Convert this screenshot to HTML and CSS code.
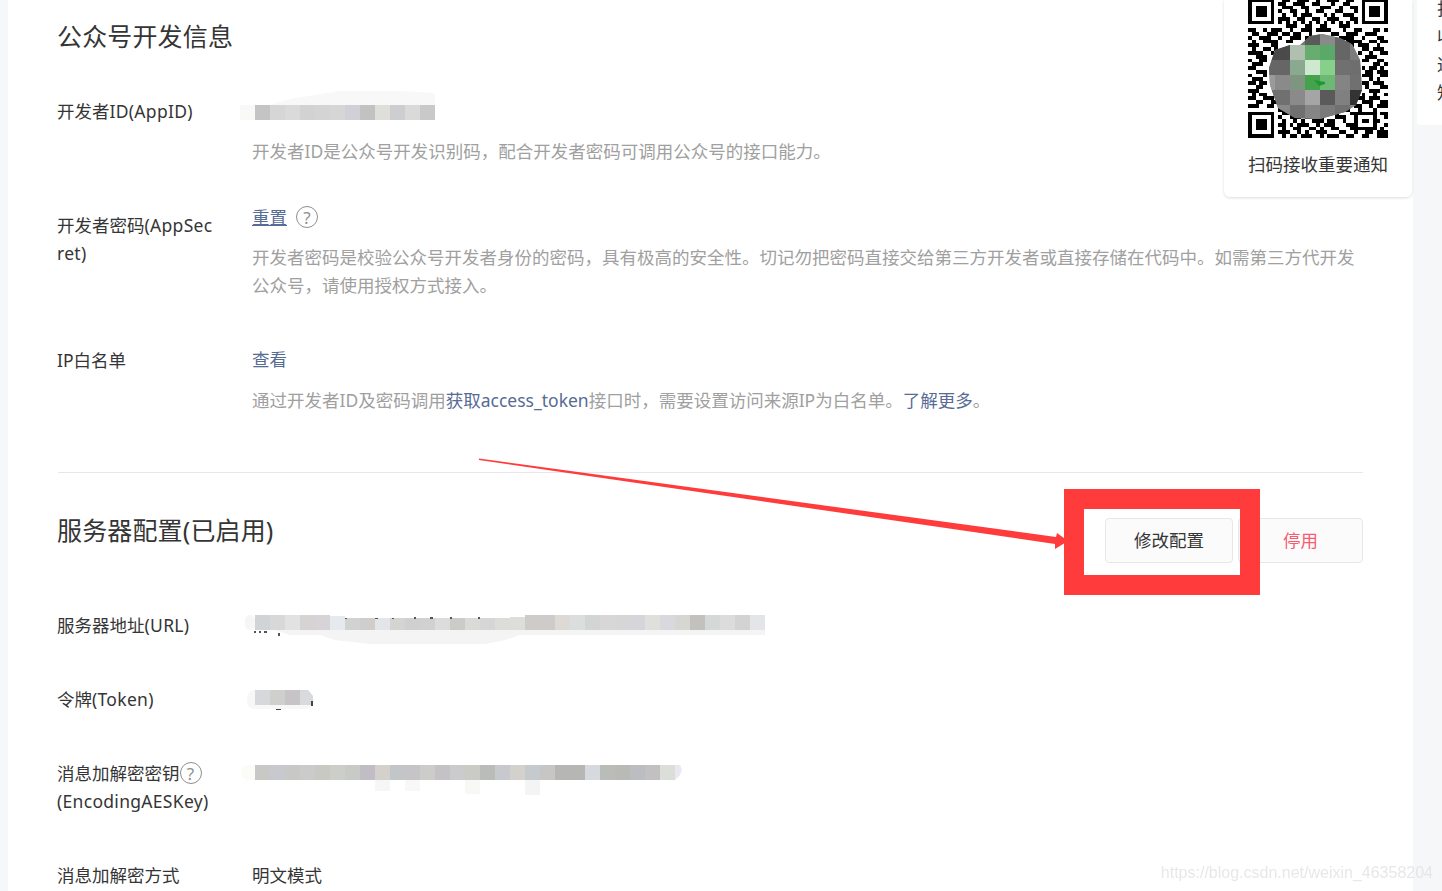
FILE: index.html
```html
<!DOCTYPE html>
<html lang="zh-CN">
<head>
<meta charset="utf-8">
<title>公众号开发信息</title>
<link rel="stylesheet" href="styles.css">
</head>
<body>
<div class="page">
  <main class="main">
    <section class="section section-first">
      <h2 class="title">公众号开发信息</h2>
      <div class="row">
        <div class="label">开发者<span class="en">ID(AppID)</span></div>
        <div class="value">
          <svg class="mosaic" width="200" height="28" viewBox="240 97 200 28">
            <path d="M240 118l10-7 40-12 50-8h60l35 2v12h-195z" fill="#f8f8f8"/>
            <rect x="240" y="110" width="15" height="10" fill="#f9f9f8"/>
            <rect x="255" y="105" width="15" height="15" fill="#c4c4c4"/>
            <rect x="270" y="105" width="15" height="15" fill="#d6d6d6"/>
            <rect x="285" y="105" width="15" height="15" fill="#dadada"/>
            <rect x="300" y="105" width="15" height="15" fill="#d2d2d2"/>
            <rect x="315" y="105" width="15" height="15" fill="#d4d4d4"/>
            <rect x="330" y="105" width="15" height="15" fill="#d6d6d6"/>
            <rect x="345" y="105" width="15" height="15" fill="#d0d1d6"/>
            <rect x="360" y="105" width="15" height="15" fill="#c2c2c2"/>
            <rect x="375" y="105" width="15" height="15" fill="#dfdedb"/>
            <rect x="390" y="105" width="15" height="15" fill="#cdced2"/>
            <rect x="405" y="105" width="15" height="15" fill="#dadada"/>
            <rect x="420" y="105" width="15" height="15" fill="#c9c9c9"/>
          </svg>
          <p class="desc">开发者ID是公众号开发识别码，配合开发者密码可调用公众号的接口能力。</p>
        </div>
      </div>
      <div class="row">
        <div class="label">开发者密码<span class="en">(AppSecret)</span></div>
        <div class="value value-raised">
          <div class="action"><a class="link link-underlined" href="#">重置</a><span class="help help-spaced">?</span></div>
          <p class="desc">开发者密码是校验公众号开发者身份的密码，具有极高的安全性。切记勿把密码直接交给第三方开发者或直接存储在代码中。如需第三方代开发公众号，请使用授权方式接入。</p>
        </div>
      </div>
      <div class="row">
        <div class="label label-nudged">IP白名单</div>
        <div class="value">
          <a class="link" href="#">查看</a>
          <p class="desc desc-loose">通过开发者ID及密码调用<a class="link" href="#">获取access_token</a>接口时，需要设置访问来源IP为白名单。<a class="link" href="#">了解更多</a>。</p>
        </div>
      </div>
    </section>
    <section class="section">
      <div class="section-head">
        <h2 class="title">服务器配置(已启用)</h2>
        <div class="buttons">
          <button class="btn" type="button">修改配置</button>
          <button class="btn btn-danger" type="button">停用</button>
        </div>
      </div>
      <div class="row">
        <div class="label">服务器地址<span class="en">(URL)</span></div>
        <div class="value">
          <svg class="mosaic" width="530" height="28" viewBox="240 611 530 28">
            <path d="M250 630h515v5h-245l-15 5-20 4h-115l-35-4-15-5h-30l-15-5z" fill="#f4f4f4"/>
            <rect x="245" y="615" width="10" height="15" rx="5" fill="#f8f6f4"/>
            <rect x="255" y="615" width="15" height="15" fill="#d0d4d6"/>
            <rect x="270" y="615" width="15" height="15" fill="#d8d8d8"/>
            <rect x="285" y="615" width="15" height="15" fill="#e2e2e2"/>
            <rect x="300" y="615" width="15" height="15" fill="#d6d4d2"/>
            <rect x="315" y="615" width="15" height="15" fill="#d6d4d6"/>
            <rect x="330" y="616" width="15" height="14" fill="#e6eaee"/>
            <rect x="345" y="618" width="15" height="12" fill="#d2d2d2"/>
            <rect x="360" y="618" width="15" height="12" fill="#cfcecc"/>
            <rect x="375" y="618" width="15" height="12" fill="#e2e6e8"/>
            <rect x="390" y="618" width="15" height="12" fill="#d4d4d2"/>
            <rect x="405" y="618" width="15" height="12" fill="#d0d0d0"/>
            <rect x="420" y="618" width="15" height="12" fill="#d0d2d2"/>
            <rect x="435" y="618" width="15" height="12" fill="#dcdcda"/>
            <rect x="450" y="618" width="15" height="12" fill="#cccbc9"/>
            <rect x="465" y="618" width="15" height="12" fill="#dadad8"/>
            <rect x="480" y="618" width="15" height="12" fill="#d4d6d8"/>
            <rect x="495" y="618" width="15" height="12" fill="#dddcda"/>
            <rect x="510" y="617" width="15" height="13" fill="#dcdedc"/>
            <rect x="525" y="615" width="30" height="15" fill="#cdccca"/>
            <rect x="555" y="615" width="15" height="15" fill="#dddad6"/>
            <rect x="570" y="615" width="15" height="15" fill="#dcdddf"/>
            <rect x="585" y="615" width="15" height="15" fill="#d2d5d4"/>
            <rect x="600" y="615" width="15" height="15" fill="#d8d6d6"/>
            <rect x="615" y="615" width="15" height="15" fill="#d6d6d6"/>
            <rect x="630" y="615" width="15" height="15" fill="#d4d6da"/>
            <rect x="645" y="615" width="15" height="15" fill="#dfdfdc"/>
            <rect x="660" y="615" width="15" height="15" fill="#d9d9dd"/>
            <rect x="675" y="615" width="15" height="15" fill="#d6d6d3"/>
            <rect x="690" y="615" width="15" height="15" fill="#c2c1be"/>
            <rect x="705" y="615" width="15" height="15" fill="#d4d8d7"/>
            <rect x="720" y="615" width="15" height="15" fill="#dcdcdc"/>
            <rect x="735" y="615" width="15" height="15" fill="#d2d3d2"/>
            <rect x="750" y="615" width="15" height="15" fill="#e4e5e8"/>
            <path d="M254 631h2v2h-2zM259 631h2v2h-2zM264 631h3v2h-3zM278 633h2v3h-2zM345 618h2v1h-2zM375 618h3v1h-3zM392 618h2v1h-2zM414 617h2v2h-2zM430 617h3v2h-3zM450 617h2v2h-2zM478 617h2v2h-2z" fill="#555555"/>
          </svg>
        </div>
      </div>
      <div class="row">
        <div class="label">令牌<span class="en">(Token)</span></div>
        <div class="value">
          <svg class="mosaic" width="100" height="28" viewBox="240 685 100 28">
            <rect x="247" y="690" width="66" height="19" rx="8" fill="#f8f7f6"/>
            <rect x="255" y="690" width="15" height="15" fill="#d6d8dc"/>
            <rect x="270" y="690" width="15" height="15" fill="#cfcfcd"/>
            <rect x="285" y="690" width="15" height="15" fill="#c6c4c6"/>
            <path d="M300 690h8l5 6v9h-13z" fill="#d8dade"/>
            <path d="M276 709h5v1h-5zM311 701h2v5h-2z" fill="#444444"/>
          </svg>
        </div>
      </div>
      <div class="row">
        <div class="label">消息加解密密钥<span class="help">?</span><br><span class="en">(EncodingAESKey)</span></div>
        <div class="value">
          <svg class="mosaic" width="450" height="28" viewBox="240 759 450 28">
            <rect x="241" y="765" width="20" height="15" rx="7" fill="#fbfbf8"/>
            <rect x="375" y="780" width="15" height="11" fill="#f6f6f6"/>
            <rect x="405" y="780" width="15" height="11" fill="#f8f8f6"/>
            <rect x="465" y="780" width="15" height="14" fill="#f8f8f6"/>
            <rect x="525" y="780" width="15" height="15" fill="#f4f4f4"/>
            <rect x="255" y="765" width="15" height="15" fill="#c8c8c6"/>
            <rect x="270" y="765" width="15" height="15" fill="#c8c9ce"/>
            <rect x="285" y="765" width="15" height="15" fill="#c8c8c6"/>
            <rect x="300" y="765" width="15" height="15" fill="#cbcbcb"/>
            <rect x="315" y="765" width="15" height="15" fill="#c9c9c4"/>
            <rect x="330" y="765" width="15" height="15" fill="#ccceca"/>
            <rect x="345" y="765" width="15" height="15" fill="#c8cac8"/>
            <rect x="360" y="765" width="15" height="15" fill="#c0bec4"/>
            <rect x="375" y="765" width="15" height="15" fill="#d4d0cc"/>
            <rect x="390" y="765" width="15" height="15" fill="#c2c6c9"/>
            <rect x="405" y="765" width="15" height="15" fill="#c6c4c6"/>
            <rect x="420" y="765" width="15" height="15" fill="#cccccb"/>
            <rect x="435" y="765" width="15" height="15" fill="#c4c2c5"/>
            <rect x="450" y="765" width="15" height="15" fill="#cbcbce"/>
            <rect x="465" y="765" width="15" height="15" fill="#cacbc5"/>
            <rect x="480" y="765" width="15" height="15" fill="#babcba"/>
            <rect x="495" y="765" width="15" height="15" fill="#c8c9ce"/>
            <rect x="510" y="765" width="15" height="15" fill="#d4d0cc"/>
            <rect x="525" y="765" width="15" height="15" fill="#c4cacd"/>
            <rect x="540" y="765" width="15" height="15" fill="#c8c6c4"/>
            <rect x="555" y="765" width="30" height="15" fill="#b6b6b4"/>
            <rect x="585" y="765" width="15" height="15" fill="#d6dade"/>
            <rect x="600" y="765" width="15" height="15" fill="#babcb8"/>
            <rect x="615" y="765" width="15" height="15" fill="#b9b9b6"/>
            <rect x="630" y="765" width="15" height="15" fill="#bcbdc0"/>
            <rect x="645" y="765" width="15" height="15" fill="#c2c0c0"/>
            <rect x="660" y="765" width="15" height="15" fill="#dcdeda"/>
            <path d="M675 765h5l2 5-2 5-5 5z" fill="#e8e8f0"/>
          </svg>
        </div>
      </div>
      <div class="row">
        <div class="label">消息加解密方式</div>
        <div class="value">明文模式</div>
      </div>
    </section>
  </main>
  <aside class="side"><div class="side-text">扫<br>收<br>通<br>知</div></aside>
</div>

<div class="qr-card">
  <svg class="qr" width="140" height="138" viewBox="1248 0 140 138">
    <defs>
      <clipPath id="blob"><path d="M1300 45l10-9 12-2 18 4 12 6 8 16 2 30-6 15-11 7-25 7-25-1-17-10-8-23-1-17 6-18 15-5z"/></clipPath>
    </defs>
    <g transform="translate(1248 -2) scale(3.784)">
      <path class="qr-ink" d="M0 .5h7M30 .5h7M0 1.5h1M6 1.5h1M30 1.5h1M36 1.5h1M0 2.5h1M2 2.5h3M6 2.5h1M30 2.5h1M32 2.5h3M36 2.5h1M0 3.5h1M2 3.5h3M6 3.5h1M30 3.5h1M32 3.5h3M36 3.5h1M0 4.5h1M2 4.5h3M6 4.5h1M30 4.5h1M32 4.5h3M36 4.5h1M0 5.5h1M6 5.5h1M30 5.5h1M36 5.5h1M0 6.5h7M30 6.5h7M0 30.500h7M0 31.500h1M6 31.500h1M0 32.500h1M2 32.500h3M6 32.500h1M0 33.500h1M2 33.500h3M6 33.500h1M0 34.500h1M2 34.500h3M6 34.500h1M0 35.500h1M6 35.500h1M0 36.500h7"/>
      <path class="qr-ink" d="M9 .5h2M13 .5h3M18 .5h1M21 .5h3M26 .5h2M8 1.500h2M12 1.500h3M17 1.500h2M22 1.500h1M25 1.500h2M9 2.500h3M14 2.500h2M19 2.500h3M24 2.500h1M27 2.500h2M8 3.500h1M11 3.500h2M15 3.500h1M18 3.500h2M23 3.500h2M28 3.500h1M9 4.500h1M12 4.500h1M14 4.500h3M20 4.500h1M22 4.500h1M25 4.500h3M8 5.500h3M13 5.500h2M17 5.500h2M21 5.500h3M27 5.500h2M8 6.500h1M10 6.500h1M12 6.500h1M14 6.500h1M16 6.500h1M18 6.500h1M20 6.500h1M22 6.500h1M24 6.500h1M26 6.500h1M28 6.500h1M10 7.500h3M15 7.500h2M19 7.500h2M24 7.500h3M0 8.500h2M4 8.500h1M6 8.500h3M11 8.500h1M14 8.500h3M18 8.500h4M25 8.500h1M28 8.500h2M33 8.500h2M36 8.500h1M1 9.500h2M5 9.500h3M9 9.500h2M12 9.500h2M16 9.500h1M22 9.500h2M26 9.500h3M31 9.500h3M0 10.500h1M3 10.500h3M8 10.500h1M11 10.500h3M15 10.500h1M24 10.500h4M30 10.500h1M34 10.500h2M1 11.500h1M4 11.500h4M10 11.500h2M26 11.500h4M32 11.500h2M35 11.500h2M0 12.500h3M6 12.500h2M26 12.500h2M29 12.500h3M34 12.500h1M1 13.500h1M4 13.500h2M7 13.500h1M30 13.500h2M33 13.500h3M0 14.500h4M6 14.500h1M29 14.500h1M32 14.500h1M35 14.500h2M2 15.500h3M31 15.500h3M0 16.500h1M3 16.500h2M30 16.500h2M34 16.500h2M1 17.500h3M33 17.500h2M36 17.500h1M0 18.500h2M30 18.500h1M32 18.500h2M35 18.500h1M2 19.500h3M31 19.500h2M34 19.500h3M0 20.500h1M4 20.500h1M30 20.500h3M35 20.500h2M1 21.500h3M32 21.500h1M34 21.500h1M0 22.500h2M3 22.500h2M30 22.500h2M33 22.500h3M2 23.500h2M31 23.500h1M35 23.500h2M0 24.500h3M32 24.500h3M1 25.500h1M3 25.500h2M30 25.500h1M33 25.500h1M36 25.500h1M0 26.500h2M4 26.500h3M29 26.500h2M32 26.500h3M2 27.500h2M6 27.500h2M30 27.500h3M35 27.500h2M0 28.500h3M5 28.500h2M28 28.500h2M32 28.500h1M34 28.500h3M8 29.500h3M13 29.500h2M18 29.500h3M25 29.500h2M29 29.500h1M33 29.500h1M9 30.500h2M13 30.500h1M16 30.500h2M22 30.500h2M27 30.500h7M35 30.500h2M8 31.500h1M11 31.500h3M15 31.500h2M19 31.500h1M23 31.500h3M28 31.500h1M33 31.500h1M36 31.500h1M9 32.500h1M12 32.500h1M14 32.500h1M17 32.500h3M21 32.500h2M25 32.500h1M28 32.500h1M30 32.500h2M33 32.500h2M8 33.500h2M11 33.500h1M13 33.500h3M18 33.500h1M20 33.500h3M26 33.500h3M33 33.500h1M36 33.500h1M9 34.500h1M12 34.500h2M16 34.500h2M19 34.500h1M22 34.500h2M27 34.500h7M35 34.500h1M8 35.500h3M13 35.500h1M15 35.500h1M18 35.500h3M24 35.500h2M28 35.500h1M31 35.500h2M34 35.500h3M9 36.500h1M11 36.500h2M14 36.500h3M19 36.500h1M21 36.500h3M26 36.500h2M30 36.500h2M34 36.500h3"/>
    </g>
    <g clip-path="url(#blob)">
      <rect x="1265" y="30" width="105" height="90" fill="#767676"/>
      <rect x="1305" y="30" width="15" height="15" fill="#5a5a5a"/>
      <rect x="1320" y="30" width="15" height="15" fill="#8a8a8a"/>
      <rect x="1335" y="30" width="15" height="15" fill="#666666"/>
      <rect x="1265" y="45" width="25" height="15" fill="#4a4a4a"/>
      <rect x="1290" y="45" width="15" height="15" fill="#b0c0b0"/>
      <rect x="1305" y="45" width="15" height="15" fill="#66ad6f"/>
      <rect x="1320" y="45" width="15" height="15" fill="#5aa968"/>
      <rect x="1335" y="45" width="15" height="15" fill="#666666"/>
      <rect x="1350" y="45" width="15" height="15" fill="#7c7c7c"/>
      <rect x="1265" y="60" width="25" height="15" fill="#666666"/>
      <rect x="1290" y="60" width="15" height="15" fill="#8aa98e"/>
      <rect x="1305" y="60" width="15" height="15" fill="#cfe8d0"/>
      <rect x="1320" y="60" width="15" height="15" fill="#86d08c"/>
      <rect x="1335" y="60" width="15" height="15" fill="#707070"/>
      <rect x="1350" y="60" width="15" height="15" fill="#6e6e6e"/>
      <rect x="1265" y="75" width="10" height="15" fill="#9a9a9a"/>
      <rect x="1275" y="75" width="15" height="15" fill="#8a8a8a"/>
      <rect x="1290" y="75" width="15" height="15" fill="#7f957f"/>
      <rect x="1305" y="75" width="15" height="15" fill="#45a34e"/>
      <rect x="1320" y="75" width="15" height="15" fill="#6db874"/>
      <rect x="1335" y="75" width="15" height="15" fill="#848484"/>
      <rect x="1350" y="75" width="15" height="15" fill="#707070"/>
      <rect x="1265" y="90" width="25" height="15" fill="#707070"/>
      <rect x="1290" y="90" width="15" height="15" fill="#8a8a8a"/>
      <rect x="1305" y="90" width="15" height="15" fill="#a5a5a5"/>
      <rect x="1320" y="90" width="15" height="15" fill="#5a5a5a"/>
      <rect x="1335" y="90" width="15" height="15" fill="#808080"/>
      <rect x="1350" y="90" width="15" height="15" fill="#333333"/>
      <rect x="1265" y="105" width="25" height="15" fill="#888888"/>
      <rect x="1290" y="105" width="15" height="15" fill="#707070"/>
      <rect x="1305" y="105" width="15" height="15" fill="#858585"/>
      <rect x="1320" y="105" width="15" height="15" fill="#7a7a7a"/>
      <rect x="1335" y="105" width="15" height="15" fill="#707070"/>
      <rect x="1350" y="105" width="15" height="15" fill="#888888"/>
      <path d="M1314 80l11 2 0 2-6 2z" fill="#1f9a33"/>
    </g>
  </svg>
  <div class="qr-text">扫码接收重要通知</div>
</div>

<svg class="annotation" width="1442" height="891" viewBox="0 0 1442 891">
  <path d="M479 458.500L1056 537l1-4 11 8-13 8v-5L479 460z" fill="#ff3b3b"/>
  <path d="M1064 489h196v106h-196zM1084 509v66h156v-66z" fill="#ff3b3b" fill-rule="evenodd"/>
</svg>

<div class="watermark">https://blog.csdn.net/weixin_46358204</div>
</body>
</html>
```

FILE: styles.css
```css
* {
  box-sizing: border-box;
}

html,
body {
  height: 891px;
  margin: 0;
  overflow: hidden;
}

body {
  position: relative;
  background: #f6f7f9;
  color: #353535;
  font-family: "Noto Sans", "Noto Sans CJK SC", sans-serif;
  font-size: 17.5px;
  line-height: 28px;
}

.page {
  display: flex;
  align-items: flex-start;
  gap: 4px;
  padding-left: 8px;
}

.main {
  flex: none;
  width: 1405px;
  height: 891px;
  padding: 18px 50px 0;
  background: #fff;
}

.section-first {
  padding-bottom: 12px;
  border-bottom: 1px solid #e7e7eb;
  margin-bottom: 39px;
}

.title {
  margin: 0 0 43px -1px;
  font-size: 25px;
  font-weight: 400;
  line-height: 36px;
  letter-spacing: 0.15px;
}

.section-head {
  display: flex;
  justify-content: space-between;
  align-items: flex-start;
  margin-bottom: 48px;
}

.section-head .title {
  margin: 0 0 0 -1px;
}

.buttons {
  display: flex;
  gap: 5px;
  margin-top: 6px;
}

.btn {
  height: 45px;
  width: 128px;
  padding: 0 0 2px;
  background: #fbfbfb;
  border: 1px solid #e7e7eb;
  border-radius: 4px;
  color: #353535;
  font: inherit;
}

.btn-danger {
  width: 125px;
  color: #fa5b70;
}

.row {
  display: grid;
  grid-template-columns: 195px 1fr;
  margin: 0 0 46px -1px;
}

.label {
  width: 162px;
  word-break: break-all;
}

.en {
  letter-spacing: 0.3px;
}

.label-nudged {
  padding-top: 1px;
}

.value-raised {
  margin-top: -8px;
}

.mosaic {
  display: block;
  margin-left: -12px;
  overflow: visible;
}

.action {
  display: flex;
  align-items: center;
}

.link {
  color: #576b95;
  text-decoration: none;
}

.link-underlined {
  text-decoration: underline;
}

.desc {
  margin: 12px 0 0;
  color: #a0a0a0;
}

.desc-loose {
  margin-top: 13px;
}

.help {
  display: inline-flex;
  align-items: center;
  justify-content: center;
  width: 22px;
  height: 22px;
  margin-top: 3px;
  border: 1px solid #8f8f8f;
  border-radius: 50%;
  color: #8f8f8f;
  font-size: 17px;
  line-height: 1;
  vertical-align: top;
}

.help-spaced {
  margin: 0 0 0 9px;
}

.side {
  flex: none;
  width: 25px;
  height: 125px;
  padding-left: 20px;
  overflow: hidden;
  background: #fff;
  border-bottom-left-radius: 4px;
}

.side-text {
  margin-top: -6px;
  white-space: nowrap;
}

.qr-card {
  position: absolute;
  top: 0;
  right: 30px;
  display: flex;
  flex-direction: column;
  align-items: center;
  width: 188px;
  height: 197px;
  background: #fff;
  border-radius: 0 0 6px 6px;
  box-shadow: 0 1px 3px rgba(0, 0, 0, 0.14);
}

.qr {
  display: block;
  flex: none;
}

.qr-ink {
  fill: none;
  stroke: #000;
  stroke-width: 1;
  shape-rendering: crispEdges;
}

.qr-text {
  margin-top: 12px;
  white-space: nowrap;
}

.annotation {
  position: absolute;
  top: 0;
  left: 0;
  pointer-events: none;
}

.watermark {
  position: absolute;
  right: 9px;
  top: 861px;
  color: #e2e2e2;
  font-family: "Liberation Sans", Arial, sans-serif;
  font-size: 16px;
  line-height: 24px;
  opacity: 0.8;
  filter: blur(0.4px);
}
```
